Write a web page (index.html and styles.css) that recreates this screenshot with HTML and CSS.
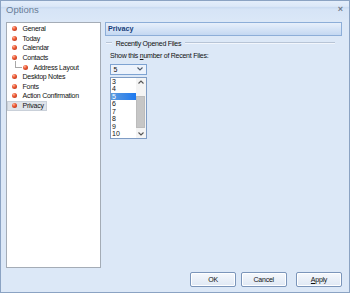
FILE: index.html
```html
<!DOCTYPE html>
<html>
<head>
<meta charset="utf-8">
<link rel="stylesheet" href="styles.css">
</head>
<body>
<div class="window">
  <div class="titlebar">
    <span class="title">Options</span>
    <span class="close">×</span>
  </div>
  <div class="content">
    <ul class="tree">
      <li class="row"><span class="node"><span class="dot"></span>General</span></li>
      <li class="row"><span class="node"><span class="dot"></span>Today</span></li>
      <li class="row"><span class="node"><span class="dot"></span>Calendar</span></li>
      <li class="row"><span class="node"><span class="dot"></span>Contacts</span></li>
      <li class="row"><span class="node"><span class="branch"></span><span class="dot child"></span>Address Layout</span></li>
      <li class="row"><span class="node"><span class="dot"></span>Desktop Notes</span></li>
      <li class="row"><span class="node"><span class="dot"></span>Fonts</span></li>
      <li class="row"><span class="node"><span class="dot"></span>Action Confirmation</span></li>
      <li class="row"><span class="node selected"><span class="dot"></span>Privacy</span></li>
    </ul>
    <div class="main">
      <div class="header">Privacy</div>
      <div class="group">
        <span class="gline short"></span>
        <span class="gtitle">Recently Opened Files</span>
        <span class="gline long"></span>
      </div>
      <div class="label">Show this <u>n</u>umber of Recent Files:</div>
      <div class="combo">
        <span class="combo-value">5</span>
        <svg class="chev" width="6" height="4" viewBox="0 0 6 4"><path d="M0.5 0.5 L3 3 L5.5 0.5" fill="none" stroke="#4d5a6b" stroke-width="1.1"/></svg>
        <div class="droplist">
          <ul class="options">
            <li>3</li>
            <li>4</li>
            <li class="hl">5</li>
            <li>6</li>
            <li>7</li>
            <li>8</li>
            <li>9</li>
            <li>10</li>
          </ul>
          <div class="scrollbar">
            <svg class="arrow" width="6" height="4" viewBox="0 0 6 4"><path d="M0.5 3.5 L3 1 L5.5 3.5" fill="none" stroke="#555" stroke-width="1.1"/></svg>
            <div class="thumb"></div>
            <svg class="arrow" width="6" height="4" viewBox="0 0 6 4"><path d="M0.5 0.5 L3 3 L5.5 0.5" fill="none" stroke="#555" stroke-width="1.1"/></svg>
          </div>
        </div>
      </div>
    </div>
  </div>
  <div class="footer">
    <button class="btn">OK</button>
    <button class="btn">Cancel</button>
    <button class="btn apply"><u>A</u>pply</button>
  </div>
</div>
</body>
</html>
```

FILE: styles.css
```css
* { box-sizing: border-box; }
html, body { margin: 0; padding: 0; }
body {
  width: 350px;
  height: 293px;
  overflow: hidden;
  font-family: "Liberation Sans", Arial, sans-serif;
  color: #111111;
}
.window {
  width: 350px;
  height: 293px;
  border: 1px solid #8ba3c3;
  background: #dce8f7;
  display: flex;
  flex-direction: column;
}
.titlebar {
  height: 19px;
  flex: none;
  display: flex;
  align-items: center;
  justify-content: space-between;
  padding: 0 6px 2px 5px;
  background: linear-gradient(#e4eefb 0, #dce8f8 28%, #cbdcf2 34%, #d6e4f6 45%, #dae7f7 100%);
}
.title {
  font-size: 9.5px;
  color: #687c96;
}
.close {
  font-size: 9px;
  color: #707a88;
  font-weight: bold;
  line-height: 1;
}
.content {
  display: flex;
  gap: 4px;
  padding: 2px 7px 0 5px;
  flex: none;
}
.tree {
  list-style: none;
  margin: 0;
  padding: 1px 0 0 0;
  width: 95px;
  height: 245.5px;
  background: #ffffff;
  border: 1px solid #a4acb6;
  font-size: 7px;
  letter-spacing: -0.25px;
  flex: none;
}
.row {
  height: 9.6px;
  display: flex;
  align-items: center;
}
.node {
  display: inline-flex;
  align-items: center;
  height: 8px;
  padding: 0 2.4px 0 4.5px;
  margin-left: 0.5px;
  white-space: nowrap;
}
.node.selected {
  background: #dfe4ea;
  outline: 0.5px solid #c9d0d9;
}
.dot {
  width: 5px;
  height: 5px;
  border-radius: 50%;
  background: radial-gradient(circle at 35% 30%, #ffb49a 0, #ec5a35 40%, #a82610 100%);
  margin-right: 5.5px;
  flex: none;
}
.dot.child { margin-left: 1.5px; }
.branch {
  width: 7px;
  height: 7.5px;
  margin-left: 2.5px;
  margin-top: -5px;
  border-left: 1px solid #a8a8a8;
  border-bottom: 1px solid #a8a8a8;
  flex: none;
}
.main {
  flex: 1;
  display: flex;
  flex-direction: column;
}
.header {
  height: 13.5px;
  border: 1px solid #8daed8;
  background: linear-gradient(#e8f0fb, #c4d8f2);
  font-size: 7.2px;
  font-weight: bold;
  color: #183f7a;
  display: flex;
  align-items: center;
  padding-left: 2px;
}
.group {
  margin-top: 4px;
  height: 7px;
  display: flex;
  align-items: center;
  font-size: 7px;
  letter-spacing: -0.25px;
  color: #111111;
}
.gline {
  height: 1px;
  background: #b7c4d6;
  border-bottom: 1px solid #f2f6fc;
  box-sizing: content-box;
}
.gline.short { width: 6px; margin-left: 1px; margin-right: 3.7px; }
.gline.long { flex: 1; margin-left: 4px; margin-right: 7px; }
.gtitle { white-space: nowrap; }
.label {
  margin-top: 5px;
  margin-left: 5px;
  line-height: 8px;
  font-size: 7px;
  letter-spacing: -0.25px;
}
.combo {
  position: relative;
  margin-top: 4px;
  margin-left: 5px;
  width: 37px;
  height: 11px;
  border: 1px solid #7ea3d2;
  background: #edf3fc;
  display: flex;
  align-items: center;
  justify-content: space-between;
  padding: 0 3px 0 2.5px;
  font-size: 7px;
}
.chev { display: block; }
.droplist {
  position: absolute;
  left: -1px;
  top: 12.3px;
  width: 36.5px;
  height: 62.5px;
  border: 1px solid #7f9cc4;
  background: #ffffff;
  display: flex;
}
.options {
  list-style: none;
  margin: 0;
  padding: 0;
  flex: 1;
  font-size: 7px;
}
.options li {
  height: 7.5px;
  line-height: 7.5px;
  padding-left: 1px;
}
.options li.hl {
  background: linear-gradient(90deg, #5b9be0 0, #3f8ae6 50%, #1d79f0 100%);
  color: #ffffff;
}
.scrollbar {
  width: 10px;
  flex: none;
  display: flex;
  flex-direction: column;
  align-items: center;
  padding: 2px 0 2px;
  background: #f4f4f4;
}
.arrow { display: block; flex: none; }
.thumb {
  width: 9px;
  margin: 12px 0 4px;
  flex: 1;
  background: #c6c6c6;
  border: 1px solid #bcbcbc;
}
.footer {
  display: flex;
  justify-content: flex-end;
  padding-right: 7px;
  margin-top: 4.8px;
}
.btn {
  width: 46px;
  height: 14.5px;
  margin: 0;
  padding: 0;
  border: 1px solid #7b95ba;
  border-radius: 2px;
  background: linear-gradient(#f5f8fd, #dfe8f4);
  font-family: "Liberation Sans", Arial, sans-serif;
  font-size: 7px;
  letter-spacing: -0.25px;
  color: #111111;
  box-shadow: inset 0 0 0 1px #ffffff;
}
.btn + .btn { margin-left: 4.7px; }
.btn.apply { margin-left: 9.3px; }
```
